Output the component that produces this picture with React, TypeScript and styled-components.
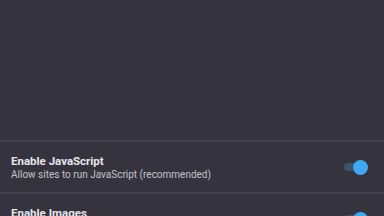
import React from "react";
import styled, { createGlobalStyle } from "styled-components";

const Global = createGlobalStyle`
  html, body { margin: 0; padding: 0; background: #34333e; overflow: hidden; }
  body { font-family: Roboto, "Noto Sans", sans-serif; }
`;

const Page = styled.div`
  width: 384px;
  height: 216px;
  background: #34333e;
  display: flex;
  flex-direction: column;
  overflow: hidden;
`;

const Spacer = styled.div`
  height: 140px;
  flex: none;
`;

const Divider = styled.div`
  height: 2px;
  background: #42414c;
  flex: none;
`;

const Row = styled.div`
  flex: none;
  height: 50px;
  display: flex;
  align-items: center;
  padding: 0 16px 0 11px;
  box-sizing: border-box;
`;

const Texts = styled.div`
  flex: 1;
  display: flex;
  flex-direction: column;
  gap: 1px;
`;

const Title = styled.div`
  color: #e6e6ea;
  font-size: 11.5px;
  font-weight: 700;
  line-height: 14px;
`;

const Subtitle = styled.div`
  color: #c4c3cb;
  font-size: 10px;
  line-height: 12px;
`;

const Switch = styled.div`
  position: relative;
  width: 24px;
  height: 15px;
  flex: none;
`;

const Track = styled.div`
  position: absolute;
  left: 0;
  right: 4px;
  top: 3.5px;
  height: 8px;
  border-radius: 4px;
  background: #3d5266;
`;

const Thumb = styled.div`
  position: absolute;
  right: 0;
  top: 0;
  width: 15px;
  height: 15px;
  border-radius: 50%;
  background: #3ea8f5;
`;

function Toggle() {
  return (
    <Switch>
      <Track />
      <Thumb />
    </Switch>
  );
}

const settings = [
  { title: "Enable JavaScript", sub: "Allow sites to run JavaScript (recommended)" },
  { title: "Enable Images", sub: "Allow sites to load images" },
];

export default function App() {
  return (
    <Page>
      <Global />
      <Spacer />
      {settings.map((s) => (
        <React.Fragment key={s.title}>
          <Divider />
          <Row>
            <Texts>
              <Title>{s.title}</Title>
              <Subtitle>{s.sub}</Subtitle>
            </Texts>
            <Toggle />
          </Row>
        </React.Fragment>
      ))}
    </Page>
  );
}
